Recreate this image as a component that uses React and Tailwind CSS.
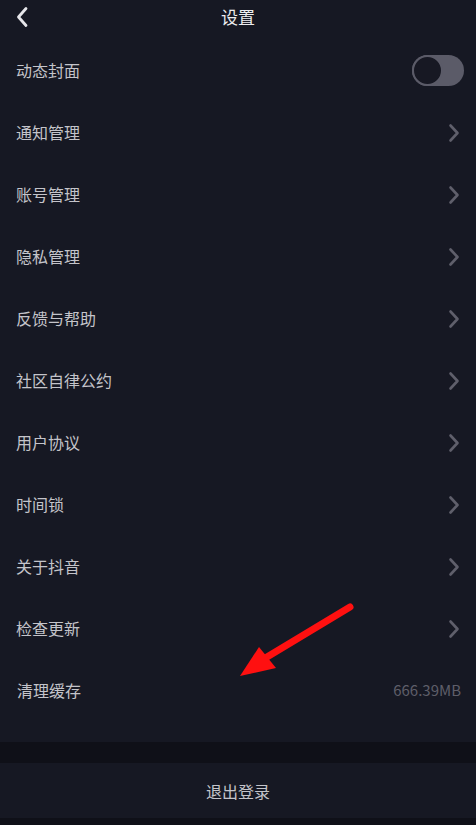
import React from "react";

const rows = [
  "通知管理",
  "账号管理",
  "隐私管理",
  "反馈与帮助",
  "社区自律公约",
  "用户协议",
  "时间锁",
  "关于抖音",
  "检查更新",
];

function Chevron() {
  return (
    <svg width="12" height="20" viewBox="0 0 12 20" className="mr-[4px]">
      <path d="M2.5 2.5 L9.5 10 L2.5 17.5" fill="none" stroke="#5f5f6b" strokeWidth="2.6" strokeLinecap="round" strokeLinejoin="round" />
    </svg>
  );
}

export default function App() {
  return (
    <div
      className="w-[476px] h-[825px] bg-[#161823] flex flex-col overflow-hidden relative"
      style={{ fontFamily: '"Noto Sans CJK SC", "Noto Sans", sans-serif' }}
    >
      <div className="h-[40px] flex items-center relative shrink-0">
        <svg width="14" height="22" viewBox="0 0 14 22" className="ml-[15px] mt-[-6px]">
          <path d="M11 2.5 L3.5 11 L11 19.5" fill="none" stroke="#e6e6ea" strokeWidth="2.8" strokeLinecap="round" strokeLinejoin="round" />
        </svg>
        <div className="absolute left-0 right-0 top-[4px] text-center text-[17px] leading-[26px] text-[#ededf0]">设置</div>
      </div>
      <div className="h-[62px] flex items-center justify-between pl-[16px] pr-[12px] shrink-0">
        <span className="text-[16px] leading-[22px] mt-[-2px] text-[#c4c4ca]">动态封面</span>
        <div className="w-[52px] h-[31px] rounded-full bg-[#5b5b68] relative mt-[-2px]">
          <div className="absolute left-0 top-0 w-[31px] h-[31px] rounded-full bg-[#171823] border-[2px] border-[#5b5b68]" />
        </div>
      </div>
      {rows.map((r) => (
        <div key={r} className="h-[62px] flex items-center justify-between pl-[16px] pr-[12px] shrink-0">
          <span className="text-[16px] leading-[22px] mt-[-2px] text-[#c4c4ca]">{r}</span>
          <Chevron />
        </div>
      ))}
      <div className="h-[62px] flex items-center justify-between pl-[17px] pr-[15px] shrink-0">
        <span className="text-[16px] leading-[22px] mt-[-2px] text-[#c4c4ca]">清理缓存</span>
        <span className="text-[15px] leading-[22px] mt-[-2px] text-[#5e5e69]">666.39MB</span>
      </div>
      <div className="h-[20px] shrink-0" />
      <div className="h-[21px] bg-[#0f1018] shrink-0" />
      <div className="h-[55px] flex items-center justify-center shrink-0">
        <span className="text-[16px] leading-[22px] text-[#c4c4ca]">退出登录</span>
      </div>
      <div className="flex-1 bg-[#0f1018]" />
      <svg className="absolute left-0 top-0 pointer-events-none" width="476" height="825" viewBox="0 0 476 825">
        <line x1="350" y1="607" x2="262" y2="660" stroke="#ff1010" strokeWidth="7" strokeLinecap="round" />
        <polygon points="240,676 259,647 276,668" fill="#ff1010" />
      </svg>
    </div>
  );
}
